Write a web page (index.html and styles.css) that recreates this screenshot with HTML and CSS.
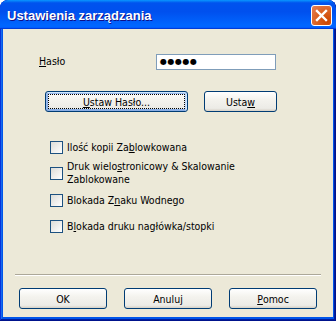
FILE: index.html
```html
<!DOCTYPE html>
<html lang="pl">
<head>
<meta charset="utf-8">
<title>Ustawienia zarządzania</title>
<link rel="stylesheet" href="styles.css">
</head>
<body>
<div class="window">
  <div class="titlebar">
    <span class="title">Ustawienia zarządzania</span>
    <button class="close" aria-label="Zamknij">
      <svg width="13" height="13" viewBox="0 0 13 13"><path d="M2 2 L11 11 M11 2 L2 11" stroke="#fff" stroke-width="2.4" stroke-linecap="square"/></svg>
    </button>
  </div>
  <div class="client">
    <div class="pw-row">
      <span class="label"><u>H</u>asło</span>
      <div class="field"><span class="dots">●●●●●</span></div>
    </div>
    <div class="btn-row">
      <button class="btn btn-wide focused"><span class="focus-ring"><u>U</u>staw Hasło...</span></button>
      <button class="btn btn-short">Usta<u>w</u></button>
    </div>
    <ul class="checks">
      <li class="check c1"><span class="box"></span><span class="ctext">Ilość kopii Za<u>b</u>lowkowana</span></li>
      <li class="check c2"><span class="box"></span><span class="ctext">Druk wielo<u>s</u>tronicowy &amp; Skalowanie<br>Zablokowane</span></li>
      <li class="check c3"><span class="box"></span><span class="ctext">Blokada Z<u>n</u>aku Wodnego</span></li>
      <li class="check c4"><span class="box"></span><span class="ctext">B<u>l</u>okada druku nagłówka/stopki</span></li>
    </ul>
    <div class="sep"></div>
    <div class="footer">
      <button class="btn btn-foot">OK</button>
      <button class="btn btn-foot">Anuluj</button>
      <button class="btn btn-foot"><u>P</u>omoc</button>
    </div>
  </div>
</div>
</body>
</html>
```

FILE: styles.css
```css
* { box-sizing: border-box; }
html, body { margin: 0; padding: 0; background: #ffffff; }
body { font-family: "DejaVu Sans Condensed", "DejaVu Sans", sans-serif; font-stretch: condensed; font-size: 10.5px; color: #000; }

.window {
  width: 336px;
  height: 321px;
  display: flex;
  flex-direction: column;
  background: #0055ea;
  border-radius: 8px 8px 0 0;
  box-shadow: inset -1px -1px #00138c, inset 1px 1px #0831d9, inset -2px -2px #001ea0, inset 2px 2px #166aee;
  overflow: hidden;
}

.titlebar {
  height: 29px;
  flex: none;
  display: flex;
  align-items: center;
  justify-content: space-between;
  padding: 2px 4px 0 7px;
  border-radius: 8px 8px 0 0;
  background: linear-gradient(180deg, #0997ff 0%, #0053ee 10%, #0050ee 40%, #0066ff 86%, #0066ff 92%, #005bff 95%, #003dd7 97%, #003dd7 100%);
}

.title {
  font-family: "Liberation Sans", Arial, sans-serif;
  font-stretch: normal;
  font-weight: bold;
  font-size: 13px;
  color: #fff;
  text-shadow: 1px 1px #0f1089;
}

.close {
  width: 21px;
  height: 21px;
  padding: 0;
  border: 1px solid #fff;
  border-radius: 3px;
  background: radial-gradient(circle at 80% 80%, #cc4600 0%, #dc6527 55%, #e5805b 100%);
  display: flex;
  align-items: center;
  justify-content: center;
}

.client {
  flex: 1;
  margin: 0 3px 4px 3px;
  background: #ece9d8;
  display: flex;
  flex-direction: column;
}

.pw-row {
  display: flex;
  align-items: flex-start;
  margin-top: 25px;
  padding-left: 36px;
  height: 16px;
}
.label { width: 117px; padding-top: 1px; }
.field {
  width: 120px;
  height: 16px;
  border: 1px solid #7f9db9;
  background: #fff;
  display: flex;
  align-items: center;
  padding-left: 3px;
}
.dots {
  font-family: "DejaVu Sans", sans-serif;
  font-stretch: normal;
  font-size: 8px;
  letter-spacing: 0.5px;
  line-height: 8px;
}

.btn {
  font-family: "DejaVu Sans Condensed", "DejaVu Sans", sans-serif;
  font-stretch: condensed;
  font-size: 10.5px;
  color: #000;
  height: 21px;
  padding: 0;
  border: 1px solid #003c74;
  border-radius: 3px;
  background: linear-gradient(180deg, #ffffff 0%, #f4f3ee 40%, #ecebe6 86%, #d6d0c5 100%);
  display: flex;
  align-items: center;
  justify-content: center;
}
.btn.focused {
  box-shadow: inset -1px 1px #cee7ff, inset 1px 2px #98b8ea, inset -2px 2px #bcd4f6, inset 1px -1px #89ade4, inset 2px -2px #89ade4;
}
.focus-ring {
  display: flex;
  align-items: center;
  justify-content: center;
  width: calc(100% - 6px);
  height: calc(100% - 6px);
  outline: 1px dotted #000;
}

.btn-row {
  display: flex;
  gap: 16px;
  margin-top: 21px;
  padding-left: 42px;
}
.btn-wide { width: 143px; }
.btn-short { width: 73px; }

.checks {
  list-style: none;
  margin: 0;
  padding: 0 0 0 47px;
}
.check {
  display: flex;
  align-items: center;
  line-height: 13px;
}
.c1 { margin-top: 29px; }
.c2 { margin-top: 6px; }
.c3 { margin-top: 8px; }
.c4 { margin-top: 13px; }
.box {
  flex: none;
  width: 13px;
  height: 13px;
  border: 1px solid #1c5180;
  background: linear-gradient(135deg, #dcdcd7 0%, #ffffff 100%);
  margin-right: 4px;
}

.sep {
  margin: auto 12px 0 12px;
  height: 2px;
  border-top: 1px solid #aca899;
  border-bottom: 1px solid #ffffff;
}

.footer {
  display: flex;
  gap: 17px;
  padding: 12px 0 8px 16px;
}
.btn-foot { width: 88px; }
```
